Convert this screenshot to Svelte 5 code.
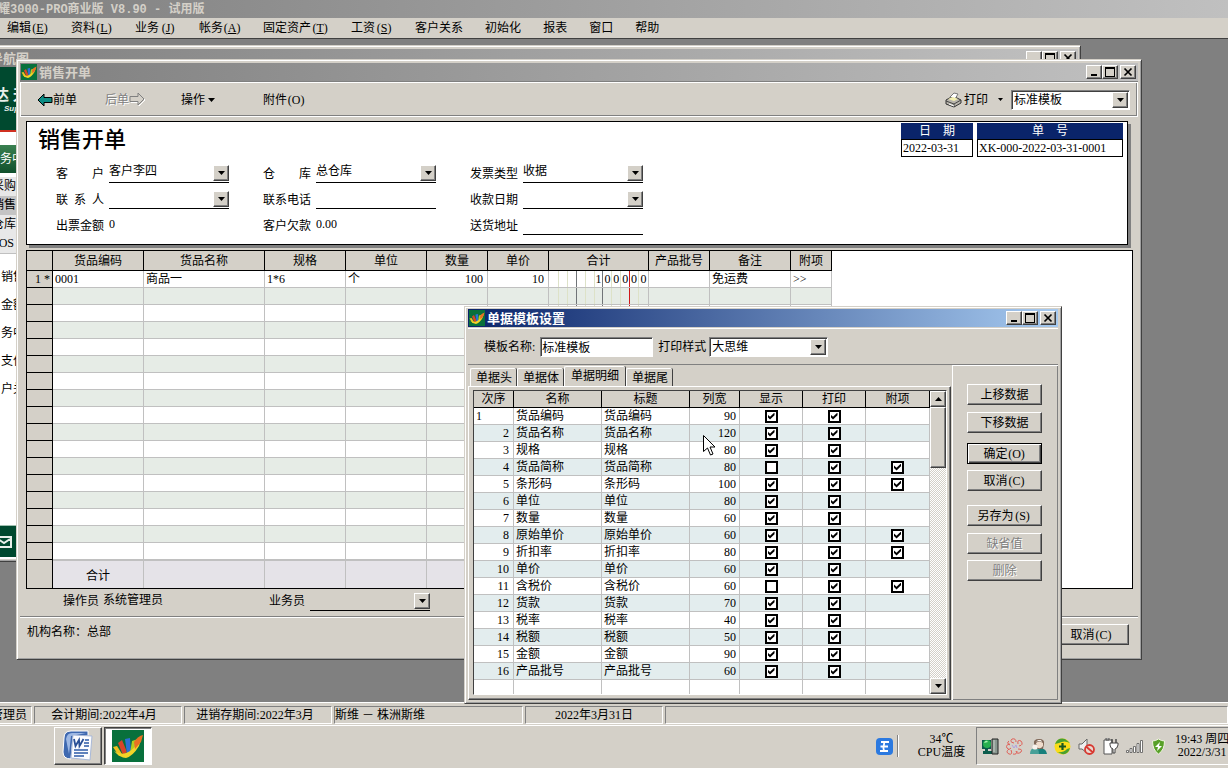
<script>
  const menus = [
    ['编辑', 'E'], ['资料', 'L'], ['业务', 'J'], ['帐务', 'A'], ['固定资产', 'T'], ['工资', 'S'],
    ['客户关系', ''], ['初始化', ''], ['报表', ''], ['窗口', ''], ['帮助', '']
  ];
  const modules = ['采购', '销售', '仓库', 'POS'];
  const links = ['销售', '金额', '务中', '支付', '户关'];

  const fields = [
    { id: 'customer', label: '客 户', value: '客户李四', kind: 'select' },
    { id: 'store', label: '仓 库', value: '总仓库', kind: 'select' },
    { id: 'invoice', label: '发票类型', value: '收据', kind: 'select' },
    { id: 'contact', label: '联 系 人', value: '', kind: 'select' },
    { id: 'phone', label: '联系电话', value: '', kind: 'input' },
    { id: 'duedate', label: '收款日期', value: '', kind: 'select' },
    { id: 'billed', label: '出票金额', value: '0', kind: 'text' },
    { id: 'debt', label: '客户欠款', value: '0.00', kind: 'text' },
    { id: 'address', label: '送货地址', value: '', kind: 'input' }
  ];

  const columns = [
    ['货品编码', 91], ['货品名称', 121], ['规格', 81], ['单位', 81], ['数量', 61],
    ['单价', 61], ['合计', 100], ['产品批号', 61], ['备注', 81], ['附项', 41]
  ];
  const item = ['0001', '商品一', '1*6', '个', '100', '10', '100000', '', '免运费', '>>'];
  const lines = Array.from({ length: 17 }, (_, i) => i);
  const lanes = Array.from({ length: 11 }, (_, i) => i);

  const settings = [
    ['货品编码', 90, 1, 1, 0], ['货品名称', 120, 1, 1, 0], ['规格', 80, 1, 1, 0],
    ['货品简称', 80, 0, 1, 1], ['条形码', 100, 1, 1, 1], ['单位', 80, 1, 1, 0],
    ['数量', 60, 1, 1, 0], ['原始单价', 60, 1, 1, 1], ['折扣率', 80, 1, 1, 1],
    ['单价', 60, 1, 1, 0], ['含税价', 60, 0, 1, 1], ['货款', 70, 1, 1, 0],
    ['税率', 40, 1, 1, 0], ['税额', 50, 1, 1, 0], ['金额', 90, 1, 1, 0], ['产品批号', 60, 1, 1, 0]
  ];
  const tabs = ['单据头', '单据体', '单据明细', '单据尾'];
  let tab = $state('单据明细');
</script>

{#snippet logo(size)}
  <svg width={size} height={size} viewBox="0 0 32 32" aria-hidden="true">
    <rect width="32" height="32" fill="#08703c" />
    <path d="M1 17l4-1 5 8-3 2z" fill="#f0c020" />
    <path d="M6 13l4-3 5 12-4 3z" fill="#d84428" />
    <path d="M13 9l5-1 1 13-4 3z" fill="#2c70d4" />
    <path d="M20 11l6-2-4 12-4 2z" fill="#b4cc20" />
    <path d="M2 21q6 4 12 2t10-8l6-9-3 10q-6 10-13 12-6 0-12-7z" fill="#f4d428" />
    <path d="M22 12q4-6 9-7l-2 7-6 7z" fill="#e87024" />
  </svg>
{/snippet}

{#snippet controls()}
  <div class="controls">
    <button aria-label="最小化"><svg width="12" height="10" viewBox="0 0 12 10"><path d="M3 7h6v2H3z" /></svg></button>
    <button aria-label="最大化"><svg width="12" height="10" viewBox="0 0 12 10"><path fill-rule="evenodd" d="M1 0h10v10H1zM2 2v7h8V2z" /></svg></button>
    <button class="close" aria-label="关闭"><svg width="12" height="10" viewBox="0 0 12 10"><path d="M2.5 1.5l7 7M9.5 1.5l-7 7" stroke="#000" stroke-width="1.7" /></svg></button>
  </div>
{/snippet}

{#snippet arrow()}
  <span class="drop"><svg width="7" height="4" viewBox="0 0 7 4" aria-hidden="true"><path d="M0 0h7L3.500 4z" /></svg></span>
{/snippet}

<div class="app">
  <header class="caption idle">耀3000-PRO商业版 V8.90 - 试用版</header>
  <nav class="menu">
    {#each menus as [name, key]}
      <button>{name}{#if key}<span class="key">(<u>{key}</u>)</span>{/if}</button>
    {/each}
  </nav>

  <main class="desk">
    <section class="win guide">
      <div class="title idle"><span>导航图</span>{@render controls()}</div>
      <div class="rail">
        <div class="brand"><b>达 天</b><i>SuperData</i></div>
        <div class="group">务中心</div>
        <ul class="modules">
          {#each modules as m}<li class:on={m === '销售'}>{m}</li>{/each}
        </ul>
        <ul class="links">
          {#each links as l}<li>{l}</li>{/each}
        </ul>
        <div class="mail">
          <svg width="20" height="12" viewBox="0 0 20 12"><path d="M1 1h18v10H1zM6 3l6 4 6-4" fill="none" stroke="#e8f0ea" stroke-width="2" /></svg>
        </div>
      </div>
    </section>

    <section class="win order">
      <div class="title idle">{@render logo(16)}<span>销售开单</span>{@render controls()}</div>
      <div class="toolbar">
        <button class="prev"><svg width="16" height="14" viewBox="0 0 16 14"><path d="M1 7l6-6v3.500h8v5H7V13z" fill="#0c8c84" stroke="#000" /></svg>前单</button>
        <button class="next" disabled>后单<svg width="17" height="15" viewBox="0 0 17 15"><path d="M16 8l-6-6v3.500H2v5h8V14z" fill="none" stroke="#fff" /><path d="M15 7L9 1v3.500H1v5h8V13z" fill="#d4d0c8" stroke="#808080" /></svg></button>
        <button class="ops">操作<svg width="7" height="4" viewBox="0 0 7 4"><path d="M0 0h7L3.500 4z" /></svg></button>
        <button>附件<span class="key">(O)</span></button>
        <button class="print">
          <svg width="17" height="16" viewBox="0 0 17 16"><path d="M1 8l7-4 8 4v3l-7 4-8-3z" fill="#b8b4ac" stroke="#333" /><path d="M5 5l4-4 4 1-3 5z" fill="#fff" stroke="#777" /><path d="M1 9l8 3 7-4M9 12v3" fill="none" stroke="#444" /><path d="M3 7l6 2 4-2-5-2z" fill="#f4f0b0" /><path d="M4 12l5 2" stroke="#fff" /></svg>打印
          <svg class="more" width="5" height="3" viewBox="0 0 5 3"><path d="M0 0h5L2.500 3z" /></svg>
        </button>
        <div class="combo sunken template"><select aria-label="打印模板"><option>标准模板</option></select>{@render arrow()}</div>
      </div>

      <div class="form">
        <div class="formhead">
          <h1>销售开单</h1>
          <div class="stamp date"><b>日　期</b><span>2022-03-31</span></div>
          <div class="stamp number"><b>单　号</b><span>XK-000-2022-03-31-0001</span></div>
        </div>
        <div class="fields">
          {#each fields as f}
            <div class="field">
              <label for={f.id}>{f.label}</label>
              {#if f.kind === 'select'}
                <div class="combo line"><select id={f.id}><option>{f.value}</option></select>{@render arrow()}</div>
              {:else if f.kind === 'input'}
                <input class="line" id={f.id} value={f.value} />
              {:else}
                <output id={f.id}>{f.value}</output>
              {/if}
            </div>
          {/each}
        </div>
      </div>

      <div class="sheet">
        <table class="goods">
          <colgroup><col style="width:26px" />{#each columns as [, w]}<col style="width:{w}px" />{/each}</colgroup>
          <thead><tr><th></th>{#each columns as [name]}<th>{name}</th>{/each}</tr></thead>
          <tbody>
            {#each lines as r}
              <tr>
                <th>{r === 0 ? '1 *' : ''}</th>
                {#each columns as _, c}
                  {#if c === 6}
                    <td class="sum"><div class="lanes">
                      {#each lanes as l}<span class:dark={l === 2 || l === 5} class:red={l === 8}>{r === 0 && l > 4 ? item[6][l - 5] : ''}</span>{/each}
                    </div></td>
                  {:else}
                    <td class:num={c === 4 || c === 5}>{r === 0 ? item[c] : ''}</td>
                  {/if}
                {/each}
              </tr>
            {/each}
          </tbody>
          <tfoot><tr><th></th>{#each columns as _, c}<td>{c === 0 ? '合计' : ''}</td>{/each}</tr></tfoot>
        </table>
      </div>

      <div class="people">
        <span>操作员</span><span class="who">系统管理员</span>
        <label for="clerk">业务员</label>
        <div class="combo line"><select id="clerk"><option></option></select>{@render arrow()}</div>
      </div>
      <div class="foot"><span>机构名称：总部</span><button class="btn">取消<span class="key">(C)</span></button></div>
    </section>

    <section class="win dialog" role="dialog" aria-label="单据模板设置">
      <div class="title active">{@render logo(16)}<span>单据模板设置</span>{@render controls()}</div>
      <div class="setup">
        <label for="tname">模板名称:</label>
        <input class="sunken" id="tname" value="标准模板" />
        <label for="style">打印样式</label>
        <div class="combo sunken"><select id="style"><option>大思维</option></select>{@render arrow()}</div>
      </div>
      <div class="body">
        <div class="pages">
          <div class="tabs" role="tablist">
            {#each tabs as t}
              <button role="tab" aria-selected={tab === t} class:on={tab === t} onclick={() => (tab = t)}>{t}</button>
            {/each}
          </div>
          <div class="page">
            <div class="list">
              <table class="cols">
                <colgroup><col style="width:40px" /><col style="width:88px" /><col style="width:88px" /><col style="width:50px" /><col style="width:63px" /><col style="width:63px" /><col /></colgroup>
                <thead><tr><th>次序</th><th>名称</th><th>标题</th><th>列宽</th><th>显示</th><th>打印</th><th>附项</th></tr></thead>
                <tbody>
                  {#each settings as [name, width, show, print, extra], i}
                    <tr>
                      <td class:num={i > 0}>{i + 1}</td><td>{name}</td><td>{name}</td><td class="num wide">{width}</td>
                      <td class="tick"><input type="checkbox" checked={!!show} aria-label="显示{name}" /></td>
                      <td class="tick"><input type="checkbox" checked={!!print} aria-label="打印{name}" /></td>
                      <td class="tick">{#if extra}<input type="checkbox" checked aria-label="附项{name}" />{/if}</td>
                    </tr>
                  {/each}
                  <tr class="rest"><td></td><td></td><td></td><td></td><td></td><td></td><td></td></tr>
                </tbody>
              </table>
              <div class="scroll">
                <button aria-label="向上"><svg width="7" height="4" viewBox="0 0 7 4"><path d="M0 4h7L3.500 0z" /></svg></button>
                <div class="thumb"></div>
                <button class="down" aria-label="向下"><svg width="7" height="4" viewBox="0 0 7 4"><path d="M0 0h7L3.500 4z" /></svg></button>
              </div>
            </div>
          </div>
        </div>
        <div class="actions">
          <button class="btn">上移数据</button>
          <button class="btn second">下移数据</button>
          <button class="btn main">确定<span class="key">(O)</span></button>
          <button class="btn">取消<span class="key">(C)</span></button>
          <button class="btn third">另存为<span class="key">(S)</span></button>
          <button class="btn" disabled>缺省值</button>
          <button class="btn" disabled>删除</button>
        </div>
      </div>
    </section>

    <svg class="pointer" width="13" height="21" viewBox="0 0 13 21" aria-hidden="true"><path d="M.5.5v16l4-3.500 3 7 2.500-1-3-7h5z" fill="#fff" stroke="#000" /></svg>
  </main>

  <footer class="status">
    <span class="p1">系统管理员</span><span class="p2">会计期间:2022年4月</span><span class="p3">进销存期间:2022年3月</span>
    <span class="p4">斯维 － 株洲斯维</span><span class="p5">2022年3月31日</span><span class="p6"></span>
  </footer>

  <div class="taskbar">
    <button class="task" aria-label="Word">
      <svg width="32" height="32" viewBox="0 0 32 32">
        <path d="M2 8Q2 1 9 1h17v5L11 8 9 29Q1 29 1 22z" fill="#3f69b0" stroke="#fff" />
        <path d="M4 9q1-6 6-6h14L9 6 7 24z" fill="#9db8e4" />
        <path d="M11 5l19 1-2 24-19-2z" fill="#fbfcff" stroke="#a9b9d8" />
        <path d="M12 9l1.500 7 3.500-6 .5 6 4-7" fill="none" stroke="#294f96" stroke-width="1.800" />
        <path d="M23 10h4M22 13h5M22 16h5M12 20h14M12 23h14M12 26h10" stroke="#2d5aa8" stroke-width="1.600" />
      </svg>
    </button>
    <button class="task on" aria-label="大思维">{@render logo(32)}</button>
    <svg class="ime" width="17" height="17" viewBox="0 0 17 17"><rect width="17" height="17" rx="4" fill="#2b79e0" /><path d="M5 4h8M4.500 8.500h7.500M4 13h8M8 4.500C9 7 6 9 8 13" fill="none" stroke="#fff" stroke-width="1.800" /></svg>
    <i class="split"></i>
    <div class="temp">34℃<br />CPU温度</div>
    <div class="tray">
      <div class="icons">
        <svg width="17" height="17" viewBox="0 0 17 17"><path d="M0 2h9v9H6v2h4v3H1v-3h2v-2H0z" fill="#0c5c4c" /><circle cx="5" cy="6" r="4" fill="#28b050" /><path d="M2 5q2-4 4-1z" fill="#a8f0b0" /><path d="M10 1h6v15h-6z" fill="#8a9890" stroke="#222" /><path d="M12 2v12" stroke="#c8d0c8" /></svg>
        <svg width="17" height="17" viewBox="0 0 17 17"><g fill="none" stroke="#e06058" stroke-width="1"><path d="M8 5Q3 4 6 1q4-1 4 3M12 6q-1-5 3-3 3 4-2 5M12 11q5 0 3 3-4 3-5-1M5 12q2 5-2 4-4-2 0-5M4 6q-5 1-3 4 2 3 4 0M11 13q0 4-4 3M3 3q-3 2 1 4" /></g><path d="M6 7l2 3 2-3 1 3" fill="none" stroke="#b0a0e0" /></svg>
        <svg width="17" height="17" viewBox="0 0 17 17"><path d="M4 6q-1-5 5-5t5 5l-1 5H6z" fill="#806858" /><path d="M6 5q3-3 7 0v3q-3 4-6 1z" fill="#f0dccc" /><path d="M6 4q3-2 6 0l-1-2H8z" fill="#f4f0ec" /><path d="M6 16q-1-5 4-5 6-1 7 5z" fill="#18807c" /><path d="M0 16q0-6 5-6 4 0 4 6z" fill="#48a098" /><circle cx="5" cy="9" r="2.600" fill="#f8f2ec" /></svg>
        <svg width="17" height="17" viewBox="0 0 17 17"><circle cx="8.500" cy="8.500" r="8" fill="#fadc18" /><path d="M1 6Q4-1 11 1l5 4Q10 2 5 5zM16 10q-2 7-8 6l-5-2q6 1 10-3z" fill="#48a030" /><path d="M8.500 5v7M5 8.500h7" stroke="#185820" stroke-width="2.200" /></svg>
        <svg width="17" height="17" viewBox="0 0 17 17"><path d="M1 6h3l5-5v14l-5-4H1z" fill="#eee" stroke="#666" /><circle cx="11.500" cy="11.500" r="4.500" fill="#e8d8d0" stroke="#d83830" stroke-width="1.800" /><path d="M8 8.500l7 6" stroke="#d83830" stroke-width="1.800" /></svg>
        <svg width="17" height="17" viewBox="0 0 17 17"><path d="M2 2h8v14H2zM4 0h3v2H4z" fill="#fff" stroke="#555" /><path d="M10 1v4M14 1v4" stroke="#444" stroke-width="1.400" /><path d="M8 5h8v2q-1 4-3 4v4h-2v-4q-3-1-3-4z" fill="#fff" stroke="#444" /></svg>
        <svg width="17" height="17" viewBox="0 0 17 17"><path d="M.5 12.500h2v2h-2zM4 10.500h2v4H4zM7.500 8.500h2v6h-2zM11 5.500h2v9h-2zM14.500 2.500h2v12h-2z" fill="#fff" stroke="#555" stroke-width=".8" /></svg>
        <svg width="17" height="17" viewBox="0 0 17 17"><path d="M8.500 1q3 2 6 2 0 9-6 13-6-4-6-13 3 0 6-2z" fill="#58a028" stroke="#f0f4e0" /><path d="M10 4L5 9h3l-1 4 5-5H9z" fill="#fff" /></svg>
      </div>
      <div class="clock">19:43 周四<br />2022/3/31</div>
    </div>
  </div>
</div>

<style>
  :global(body) { margin: 0; background: #808080; }
  * { box-sizing: border-box; }
  .app {
    min-height: 100vh; display: flex; flex-direction: column; overflow: hidden; color: #000;
    font: 12px/16px "Liberation Serif", "Noto Sans CJK SC", serif;
  }
  button, input, select { font: inherit; color: inherit; margin: 0; padding: 0; border: 0; border-radius: 0; background: none; outline: 0; }
  ul { list-style: none; margin: 0; padding: 0; }
  svg { flex: none; display: block; }
  u { text-underline-offset: 1px; }

  .idle { background: linear-gradient(90deg, #808080, #c0c0c0); color: #d4d0c8; }
  .active { background: linear-gradient(90deg, #0a246a, #a6caf0); color: #fff; }
  .caption { height: 18px; padding-top: 2px; font-weight: bold; white-space: nowrap; font-family: "Liberation Mono", "Noto Sans CJK SC", monospace; margin-left: -2px; }
  .menu { height: 21px; display: flex; gap: 22px; padding-left: 7px; background: #d4d0c8; border-bottom: 1px solid #404040; }
  .menu button { height: 20px; white-space: nowrap; }
  .key { display: inline-block; width: 18px; text-align: center; white-space: nowrap; }

  .desk { flex: 1; position: relative; z-index: 1; background: #808080; }
  .win {
    position: absolute; display: flex; flex-direction: column; background: #d4d0c8; padding: 2px;
    border: 1px solid; border-color: #d4d0c8 #404040 #404040 #d4d0c8;
    box-shadow: inset 1px 1px #fff, inset -1px -1px #a0a0a0;
  }
  .guide { top: 6px; left: -24px; right: 147px; padding-top: 3px; }
  .order { top: 20px; left: 16px; right: 86px; padding: 3px; }
  .dialog { top: 267px; left: 464px; right: 166px; padding: 2px 3px 3px; }
  .title { height: 18px; display: flex; align-items: center; gap: 2px; padding: 0 2px 0 1px; font-weight: bold; }
  .title > span { flex: 1; font-size: 13px; padding-top: 1px; }
  .controls { display: flex; }
  .controls button { width: 16px; height: 14px; display: grid; place-items: center; }
  .controls .close { margin-left: 2px; }
  .controls button, .drop, .scroll button, .thumb, .btn {
    background: #d4d0c8; border: 1px solid; border-color: #fff #404040 #404040 #fff; box-shadow: inset -1px -1px #808080;
  }

  .guide .title > span { padding-left: 10px; }
  .rail { background: #fff; margin-left: 1px; }
  .brand { height: 65px; padding: 20px 0 0 14px; background: #00492f; color: #e8f0ea; border-bottom: 2px solid #d03020; }
  .brand b { display: block; font-size: 15px; }
  .brand i { display: block; font: italic bold 8px/12px "Liberation Sans", sans-serif; padding-left: 10px; }
  .group { height: 28px; line-height: 28px; margin: 13px 0 4px; padding-left: 20px; background: linear-gradient(#3a8050, #10502c); color: #fff; }
  .modules { background: #e8e8e8; border-bottom: 1px solid #c0c0c0; }
  .modules li { height: 19px; line-height: 19px; padding-left: 12px; }
  .modules .on { background: #c4c4c4; }
  .links { padding-top: 9px; height: 271px; }
  .links li { height: 28px; line-height: 28px; padding-left: 21px; }
  .mail { height: 34px; padding: 10px 0 0 12px; background: #00492f; border-top: 1px solid #a0c0b0; border-bottom: 2px solid #fff; }

  .toolbar {
    display: flex; align-items: center; height: 35px; margin-top: 1px; padding: 0 7px 0 16px;
    border: 1px solid #fff; box-shadow: 0 -1px #808080, inset -1px -1px #808080;
  }
  .toolbar button { display: flex; align-items: center; white-space: nowrap; }
  .prev { margin-right: 28px; }
  .next { margin-right: 35px; }
  .next:disabled { color: #808080; text-shadow: 1px 1px #fff; }
  .ops { gap: 3px; margin-right: 48px; }
  .print { gap: 2px; margin-left: auto; }
  .more { margin-left: 8px; }
  .combo { position: relative; display: flex; }
  .combo select { appearance: none; flex: 1; min-width: 0; width: 100%; height: 16px; line-height: 16px; }
  .drop { position: absolute; right: 0; bottom: 0; width: 16px; height: 16px; display: grid; place-items: center; pointer-events: none; }
  .sunken { background: #fff; border: 1px solid; border-color: #808080 #fff #fff #808080; box-shadow: inset 1px 1px #404040; height: 20px; padding: 1px; }
  .sunken select { padding-left: 1px; height: 16px; }
  .sunken .drop { right: 1px; bottom: 1px; }
  .template { width: 119px; margin-left: 8px; }
  .line { width: 120px; height: 25px; border-bottom: 1px solid #000; }
  .line select { margin-top: 5px; }
  .line .drop { bottom: 1px; }

  .form { margin: 4px 10px 0 6px; border: 1px solid #000; background: #fff; box-shadow: 3px 3px #808080; padding-bottom: 8px; }
  .formhead { display: flex; height: 36px; padding: 1px 4px 0 11px; gap: 4px; }
  h1 { flex: 1; margin: 2px 0 0; font-size: 22px; line-height: 30px; font-weight: 500; }
  .stamp b { display: block; height: 16px; background: #0a246a; color: #fff; text-align: center; font-weight: normal; }
  .stamp span { display: block; height: 18px; padding-left: 1px; border: 1px solid #000; }
  .date { width: 72px; }
  .number { width: 146px; }
  .fields { display: grid; grid-template-columns: repeat(3, 173px); column-gap: 34px; padding-left: 29px; }
  .field { height: 26px; display: flex; align-items: flex-start; gap: 5px; }
  .field label { width: 48px; padding-top: 8px; text-align-last: justify; }
  output { padding-top: 6px; }

  .sheet { margin: 5px 5px 0 6px; border: 1px solid #000; background: #fff; overflow: hidden; }
  table { border-collapse: separate; border-spacing: 0; table-layout: fixed; }
  th, td { padding: 0 2px; font-weight: normal; overflow: hidden; white-space: nowrap; line-height: 16px; border: 0 solid #c0c0c0; border-width: 0 1px 1px 0; text-align: left; }
  th { background: #d4d0c8; border-color: #000; text-align: center; }
  .goods { width: 805px; }
  .goods thead th { height: 20px; }
  .goods tbody th { text-align: right; }
  .goods tbody td, .goods tbody th { height: 17px; }
  .goods tbody tr:nth-child(even) td { background: #e6ece6; }
  .num { text-align: right; padding-right: 4px; }
  .goods .sum { padding: 0; }
  .lanes { display: flex; height: 16px; }
  .lanes span { width: 9px; text-align: center; border-right: 1px solid #dde2c8; }
  .lanes span:first-child { width: 10px; }
  .lanes span:last-child { border: 0; }
  .lanes span.dark { border-right-color: #707478; }
  .lanes span.red { border-right-color: #d01818; }
  .goods tfoot td { height: 28px; padding-top: 2px; background: #e5e3e8; border-bottom: 0; border-top: 1px solid #c0c0c0; text-align: center; }
  .goods tfoot th { border-bottom: 0; }

  .people { height: 28px; display: flex; padding: 0 0 5px 43px; align-items: flex-end; border-bottom: 1px solid #808080; box-shadow: 0 1px #fff; }
  .people > span, .people label { height: 18px; }
  .people .who { height: 19px; margin: 0 106px 0 4px; }
  .people .line { margin-left: 5px; height: 22px; }
  .foot { height: 38px; padding: 6px 9px 0 7px; display: flex; justify-content: space-between; margin-top: 1px; }
  .btn { width: 75px; height: 21px; line-height: 16px; text-align: center; white-space: nowrap; padding: 0; }
  .btn:disabled { color: #808080; text-shadow: 1px 1px #fff; }

  .setup { height: 37px; margin-top: 1px; display: flex; align-items: center; padding-left: 16px; border-top: 1px solid #fff; border-bottom: 1px solid #808080; }
  .setup input { width: 113px; margin: 0 5px; }
  .setup .combo { width: 119px; margin-left: 3px; }
  .setup label { white-space: nowrap; min-width: 48px; }
  .body { display: flex; }
  .pages { flex: 1; min-width: 0; padding: 1px 1px 0 0; }
  .tabs { display: flex; align-items: flex-end; padding-left: 2px; height: 20px; }
  .tabs button { height: 18px; padding: 0 4px 0 5px; border: 1px solid #fff; border-width: 1px 0 0 1px; border-radius: 2px 2px 0 0; box-shadow: 1px 0 #404040; margin-right: 1px; }
  .tabs .on { height: 20px; padding: 0 6px 2px; }
  .page { border: 1px solid; border-color: #fff #404040 #404040 #fff; box-shadow: inset -1px -1px #808080; padding: 3px 3px 4px 4px; }
  .list { display: flex; border: 1px solid; border-color: #404040 #fff #fff #404040; }
  .cols { flex: 1; min-width: 0; background: #fff; }
  .cols th, .cols td { height: 17px; }
  .cols td { padding-top: 1px; line-height: 15px; }
  .cols tbody tr:nth-child(even) td { background: #e3edee; }
  .cols .wide { padding-right: 3px; }
  .cols .rest td { height: 14px; border-bottom: 0; line-height: 12px; }
  .cols .tick { padding: 0; }
  .tick input { appearance: none; display: grid; place-items: center; width: 13px; height: 13px; margin: 0 auto; border: 2px solid #000; background: #fff; }
  .tick input:checked::before { content: ""; width: 7px; height: 7px; background: #000; clip-path: polygon(0 28%, 36% 62%, 100% 0, 100% 38%, 36% 100%, 0 64%); }
  .scroll { width: 16px; display: flex; flex-direction: column; background: repeating-conic-gradient(#fff 0 25%, #d4d0c8 0 50%) 0 0 / 2px 2px; }
  .scroll button { height: 16px; display: grid; place-items: center; }
  .thumb { height: 61px; }
  .scroll .down { margin-top: auto; }
  .actions { width: 106px; padding: 18px 0 0 14px; border: 1px solid #fff; border-width: 1px 0 0 1px; box-shadow: inset -1px -1px #808080; display: flex; flex-direction: column; gap: 6px; }
  .actions .second { margin: 1px 0 4px; }
  .actions .third { margin: 8px 0 1px; }
  .actions .main { border: 1px solid #000; box-shadow: inset 1px 1px #fff, inset -1px -1px #404040, inset -2px -2px #808080; }
  .pointer { position: absolute; left: 703px; top: 396px; }

  .status { height: 24px; display: flex; gap: 2px; padding: 3px 0 2px; background: #d4d0c8; border-top: 1px solid #fff; border-bottom: 1px solid #fff; overflow: hidden; }
  .status span { height: 18px; flex: none; white-space: nowrap; text-align: center; border: 1px solid; border-color: #808080 #fff #fff #808080; }
  .status .p1 { width: 66px; margin-left: -34px; text-align: right; padding-right: 5px; }
  .status .p2 { width: 148px; padding-right: 8px; }
  .status .p3 { width: 148px; padding-right: 6px; }
  .status .p4 { width: 189px; text-align: left; }
  .status .p5 { width: 138px; }
  .status .p6 { flex: 1; }

  .taskbar { height: 42px; display: flex; align-items: center; padding: 1px 0 3px 54px; background: #d4d0c8; overflow: hidden; }
  .task { width: 48px; height: 38px; display: grid; place-items: center; margin-right: 2px; border: 1px solid; border-color: #fff #404040 #404040 #fff; box-shadow: inset -1px -1px #808080; }
  .task.on { background: #fff; border-color: #404040 #fff #fff #404040; box-shadow: inset 1px 1px #808080; }
  .ime { margin-left: auto; }
  .split { width: 2px; height: 22px; margin-left: 4px; border-left: 1px solid #808080; border-right: 1px solid #fff; }
  .temp { width: 77px; padding-left: 8px; text-align: center; line-height: 13px; }
  .tray { width: 252px; height: 38px; display: flex; align-items: center; padding-left: 5px; border: 1px solid; border-color: #808080 #fff #fff #808080; border-right: 0; overflow: hidden; }
  .icons { display: flex; gap: 7px; }
  .clock { flex: none; margin-left: 8px; text-align: center; line-height: 13px; white-space: nowrap; }
</style>
